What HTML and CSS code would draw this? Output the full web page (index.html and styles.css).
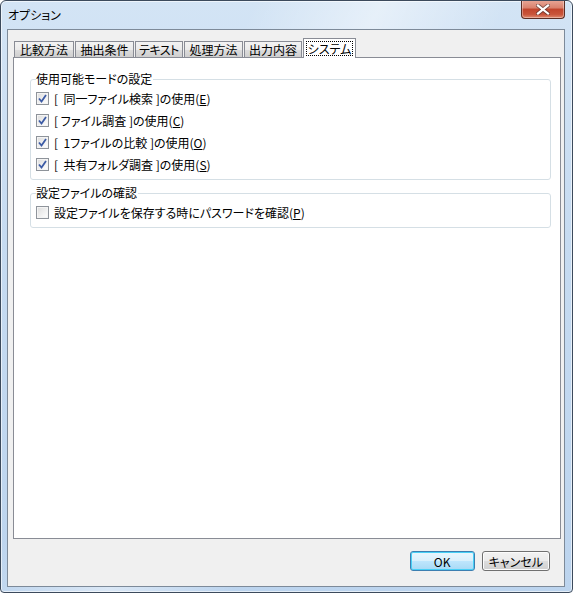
FILE: index.html
```html
<!DOCTYPE html>
<html lang="ja">
<head>
<meta charset="utf-8">
<title>オプション</title>
<link rel="stylesheet" href="styles.css">
</head>
<body>
<div class="window">
  <div class="titlebar">
    <span class="title">オプション</span>
    <button class="close" type="button" aria-label="閉じる">
      <svg width="14" height="11" viewBox="0 0 14 11">
        <path d="M2 1.5 L12 9.5 M12 1.5 L2 9.5" stroke="#3a2a2a" stroke-width="4" stroke-linecap="square" opacity="0.55"/>
        <path d="M2 1.5 L12 9.5 M12 1.5 L2 9.5" stroke="#ffffff" stroke-width="2.2" stroke-linecap="square"/>
      </svg>
    </button>
  </div>
  <div class="client">
    <div class="tabs">
      <div class="tab tab-w60">比較方法</div>
      <div class="tab tab-w59">抽出条件</div>
      <div class="tab tab-w48">テキスト</div>
      <div class="tab tab-w59">処理方法</div>
      <div class="tab tab-w58">出力内容</div>
      <div class="tab tab-selected"><span class="focus">システム</span></div>
    </div>
    <div class="panel">
      <fieldset class="group">
        <legend>使用可能モードの設定</legend>
        <label class="check"><span class="box box-checked"><svg width="9" height="9" viewBox="0 0 9 9"><path d="M1 4.5 L3.5 7.5 L8 1" fill="none" stroke="#3c5ba5" stroke-width="1.8"/></svg></span>[&nbsp; 同一ファイル検索 ]の使用(<u>E</u>)</label>
        <label class="check"><span class="box box-checked"><svg width="9" height="9" viewBox="0 0 9 9"><path d="M1 4.5 L3.5 7.5 L8 1" fill="none" stroke="#3c5ba5" stroke-width="1.8"/></svg></span>[ ファイル調査 ]の使用(<u>C</u>)</label>
        <label class="check"><span class="box box-checked"><svg width="9" height="9" viewBox="0 0 9 9"><path d="M1 4.5 L3.5 7.5 L8 1" fill="none" stroke="#3c5ba5" stroke-width="1.8"/></svg></span>[&nbsp; 1ファイルの比較 ]の使用(<u>O</u>)</label>
        <label class="check"><span class="box box-checked"><svg width="9" height="9" viewBox="0 0 9 9"><path d="M1 4.5 L3.5 7.5 L8 1" fill="none" stroke="#3c5ba5" stroke-width="1.8"/></svg></span>[&nbsp; 共有フォルダ調査 ]の使用(<u>S</u>)</label>
      </fieldset>
      <fieldset class="group">
        <legend>設定ファイルの確認</legend>
        <label class="check"><span class="box"></span>設定ファイルを保存する時にパスワードを確認(<u>P</u>)</label>
      </fieldset>
    </div>
    <div class="buttons">
      <button class="btn btn-default" type="button">OK</button>
      <button class="btn" type="button">キャンセル</button>
    </div>
  </div>
</div>
</body>
</html>
```

FILE: styles.css
```css
* {
  box-sizing: border-box;
}

html, body {
  margin: 0;
  padding: 0;
  background: #ffffff;
}

body {
  font-family: "Noto Sans CJK JP", "Noto Sans", sans-serif;
  font-size: 12px;
  font-feature-settings: "palt";
  color: #000000;
}

/* Aero window frame */
.window {
  width: 573px;
  height: 593px;
  border: 1px solid #3c4a5c;
  border-radius: 6px 6px 4px 4px;
  background:
    linear-gradient(115deg, rgba(255,255,255,0) 30%, rgba(255,255,255,0.45) 45%, rgba(255,255,255,0) 60%),
    linear-gradient(180deg, #d3e4f5 0%, #c6dbf1 40%, #bcd4ee 100%);
  box-shadow: inset 0 0 0 1px rgba(255,255,255,0.6);
  display: flex;
  flex-direction: column;
  padding: 0 7px 5px 6px;
  overflow: hidden;
}

.titlebar {
  height: 28px;
  flex: none;
  display: flex;
  align-items: flex-start;
  justify-content: space-between;
}

.title {
  margin: 6px 0 0 1px;
  font-size: 12px;
  line-height: 16px;
  color: #000000;
}

.close {
  width: 44px;
  height: 19px;
  margin: -1px 0 0 0;
  padding: 0;
  border: 1px solid #5b2d24;
  border-top: none;
  border-radius: 0 0 4px 4px;
  background: linear-gradient(180deg, #e9a898 0%, #d9806c 45%, #c1442c 50%, #c9553b 80%, #e08a6f 100%);
  box-shadow: inset 0 0 0 1px rgba(255,255,255,0.35);
  display: flex;
  align-items: center;
  justify-content: center;
}

/* Dialog client area */
.client {
  flex: 1;
  border: 1px solid #7d8a99;
  background: #f0f0f0;
  padding: 7px 3px 0 5px;
  display: flex;
  flex-direction: column;
}

.tabs {
  display: flex;
  align-items: flex-end;
  gap: 1px;
  padding-left: 1px;
  height: 20px;
  position: relative;
  z-index: 1;
}

.tab {
  height: 16px;
  padding: 0;
  border: 1px solid #898c95;
  border-bottom: none;
  background: linear-gradient(180deg, #f3f3f3 0%, #ebebeb 50%, #dddddd 51%, #cfcfcf 100%);
  line-height: 15px;
  white-space: nowrap;
  display: flex;
  justify-content: center;
}

.tab-w60 { width: 60px; }
.tab-w59 { width: 59px; }
.tab-w58 { width: 58px; }
.tab-w48 { width: 48px; letter-spacing: -0.5px; }

.tab-selected {
  width: 53px;
  height: 20px;
  margin: 0 0 -1px 0;
  padding: 2px 0 0;
  background: #ffffff;
  align-items: flex-start;
}

.focus {
  display: inline-block;
  padding: 0 1px;
  line-height: 13px;
  border: 1px dotted #000000;
}

.panel {
  flex: none;
  height: 482px;
  border: 1px solid #898c95;
  background: #ffffff;
  padding: 14px 9px 0 16px;
  display: flex;
  flex-direction: column;
  gap: 6px;
}

.group {
  margin: 0;
  border: 1px solid #d5dfe5;
  border-radius: 3px;
  padding: 1px 0 4px 5px;
  min-width: 0;
}

.group legend {
  padding: 0 1px 0 0;
  margin-left: 0;
  line-height: 14px;
}

.check {
  display: flex;
  align-items: center;
  height: 22px;
  white-space: pre;
}

.check u {
  text-underline-offset: 1px;
}

.box {
  width: 13px;
  height: 13px;
  margin-right: 5px;
  flex: none;
  border: 1px solid #8f949b;
  background: linear-gradient(135deg, #dcdcdc 0%, #f2f2f2 60%, #ffffff 100%);
  box-shadow: inset 0 0 0 1px #f4f4f4;
  display: flex;
  align-items: center;
  justify-content: center;
}

.box-checked {
  border-color: #8e939a;
}

.buttons {
  display: flex;
  justify-content: flex-end;
  gap: 7px;
  margin-top: 12px;
  padding-right: 11px;
}

.btn {
  height: 20px;
  min-width: 65px;
  padding: 0 6px;
  font-family: inherit;
  font-size: 12px;
  font-weight: 400;
  font-feature-settings: "palt";
  color: #000000;
  border: 1px solid #707070;
  border-radius: 3px;
  background: linear-gradient(180deg, #f2f2f2 0%, #ebebeb 50%, #dddddd 51%, #cfcfcf 100%);
  box-shadow: inset 0 0 0 1px #fcfcfc;
}

.btn-default {
  border-color: #3c7fb1;
  box-shadow: inset 0 0 0 1px #48d0f6;
  background: linear-gradient(180deg, #eaf6fd 0%, #d9f0fc 50%, #bee6fd 51%, #a7d9f5 100%);
}
```
